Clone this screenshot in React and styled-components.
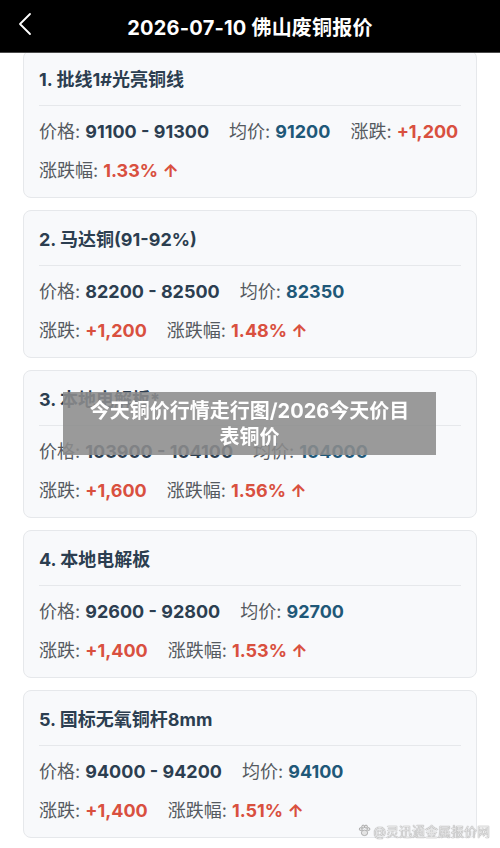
import styled, { createGlobalStyle } from 'styled-components';

const GlobalStyle = createGlobalStyle`
  html, body {
    margin: 0;
    padding: 0;
    background: #ffffff;
  }
  body {
    font-family: "Inter", "Noto Sans CJK SC", sans-serif;
  }
`;

// 报价数据
const quotes = [
  { name: '1. 批线1#光亮铜线', low: '91100', high: '91300', avg: '91200', diff: '+1,200', pct: '1.33%' },
  { name: '2. 马达铜(91-92%)', low: '82200', high: '82500', avg: '82350', diff: '+1,200', pct: '1.48%' },
  { name: '3. 本地电解板*', low: '103900', high: '104100', avg: '104000', diff: '+1,600', pct: '1.56%' },
  { name: '4. 本地电解板', low: '92600', high: '92800', avg: '92700', diff: '+1,400', pct: '1.53%' },
  { name: '5. 国标无氧铜杆8mm', low: '94000', high: '94200', avg: '94100', diff: '+1,400', pct: '1.51%' },
];

const Page = styled.div`
  min-height: 848px;
  background: #ffffff;
`;

const Header = styled.header`
  position: fixed;
  top: 0;
  left: 0;
  right: 0;
  height: 53px;
  background: #000000;
  border-bottom: 1px solid #4a4a4a;
  box-sizing: border-box;
  display: flex;
  align-items: center;
  justify-content: center;
  z-index: 10;
`;

const BackButton = styled.button`
  position: absolute;
  left: 14px;
  top: 11px;
  width: 22px;
  height: 26px;
  padding: 0;
  border: none;
  background: transparent;
  display: flex;
  align-items: center;
  justify-content: center;
`;

const Title = styled.h1`
  margin: 0;
  color: #ffffff;
  font-size: 20px;
  font-weight: 700;
  letter-spacing: 0.01em;
`;

const List = styled.main`
  display: flex;
  flex-direction: column;
  gap: 12px;
  padding: 50px 23px 10px;
`;

const Card = styled.section`
  background: #f8f9fb;
  border: 1px solid #e6e8eb;
  border-radius: 8px;
  padding: 16px 15px 13px 15px;
`;

const CardTitle = styled.h2`
  margin: 0;
  padding-bottom: 12px;
  border-bottom: 1px solid #e6e8eb;
  color: #2c3e50;
  font-size: 18px;
  line-height: 26px;
  font-weight: 700;
`;

const Fields = styled.div`
  display: flex;
  flex-wrap: wrap;
  column-gap: 20px;
  row-gap: 13px;
  margin-top: 13px;
`;

const Field = styled.span`
  font-size: 18px;
  line-height: 26px;
  color: #555a60;
  white-space: nowrap;
`;

const toneColors = {
  dark: '#2c3e50',
  blue: '#1f5878',
  red: '#d9503f',
};

const Value = styled.b`
  font-weight: 700;
  color: ${(p) => toneColors[p.$tone]};
`;

const Overlay = styled.div`
  position: fixed;
  top: 392px;
  left: 63px;
  width: 373px;
  height: 63px;
  background: rgba(140, 140, 140, 0.88);
  display: flex;
  align-items: center;
  justify-content: center;
  text-align: center;
  color: #ffffff;
  font-size: 20px;
  font-weight: 700;
  line-height: 26px;
  padding: 0 24px;
  box-sizing: border-box;
  z-index: 5;
`;

const Watermark = styled.div`
  position: fixed;
  right: 10px;
  bottom: 8px;
  display: flex;
  align-items: center;
  gap: 2px;
  font-size: 13px;
  color: #e4e4e4;
  text-shadow: 0 0 1px #9a9a9a, 0 0 1px #9a9a9a;
  z-index: 5;
`;

const Chevron = () => (
  <svg width="14" height="24" viewBox="0 0 14 24">
    <polyline points="12,2 2,12 12,22" fill="none" stroke="#ffffff" strokeWidth="1.8" strokeLinecap="round" strokeLinejoin="round" />
  </svg>
);

const Paw = () => (
  <svg width="13" height="13" viewBox="0 0 14 14">
    <g fill="#e4e4e4" stroke="#9a9a9a" strokeWidth="0.8">
      <ellipse cx="7" cy="9.5" rx="3.4" ry="3" />
      <circle cx="3" cy="5.5" r="1.6" />
      <circle cx="5.6" cy="2.8" r="1.6" />
      <circle cx="8.6" cy="2.8" r="1.6" />
      <circle cx="11.2" cy="5.5" r="1.6" />
    </g>
  </svg>
);

const QuoteCard = ({ q }) => (
  <Card>
    <CardTitle>{q.name}</CardTitle>
    <Fields>
      <Field>
        价格: <Value $tone="dark">{q.low} - {q.high}</Value>
      </Field>
      <Field>
        均价: <Value $tone="blue">{q.avg}</Value>
      </Field>
      <Field>
        涨跌: <Value $tone="red">{q.diff}</Value>
      </Field>
      <Field>
        涨跌幅: <Value $tone="red">{q.pct} ↑</Value>
      </Field>
    </Fields>
  </Card>
);

const App = () => {
  return (
    <Page>
      <GlobalStyle />
      <Header>
        <BackButton aria-label="返回">
          <Chevron />
        </BackButton>
        <Title>2026-07-10 佛山废铜报价</Title>
      </Header>
      <List>
        {quotes.map((q) => (
          <QuoteCard key={q.name} q={q} />
        ))}
      </List>
      <Overlay>今天铜价行情走行图/2026今天价目表铜价</Overlay>
      <Watermark>
        <Paw />
        @灵迅通金属报价网
      </Watermark>
    </Page>
  );
};

export default App;
